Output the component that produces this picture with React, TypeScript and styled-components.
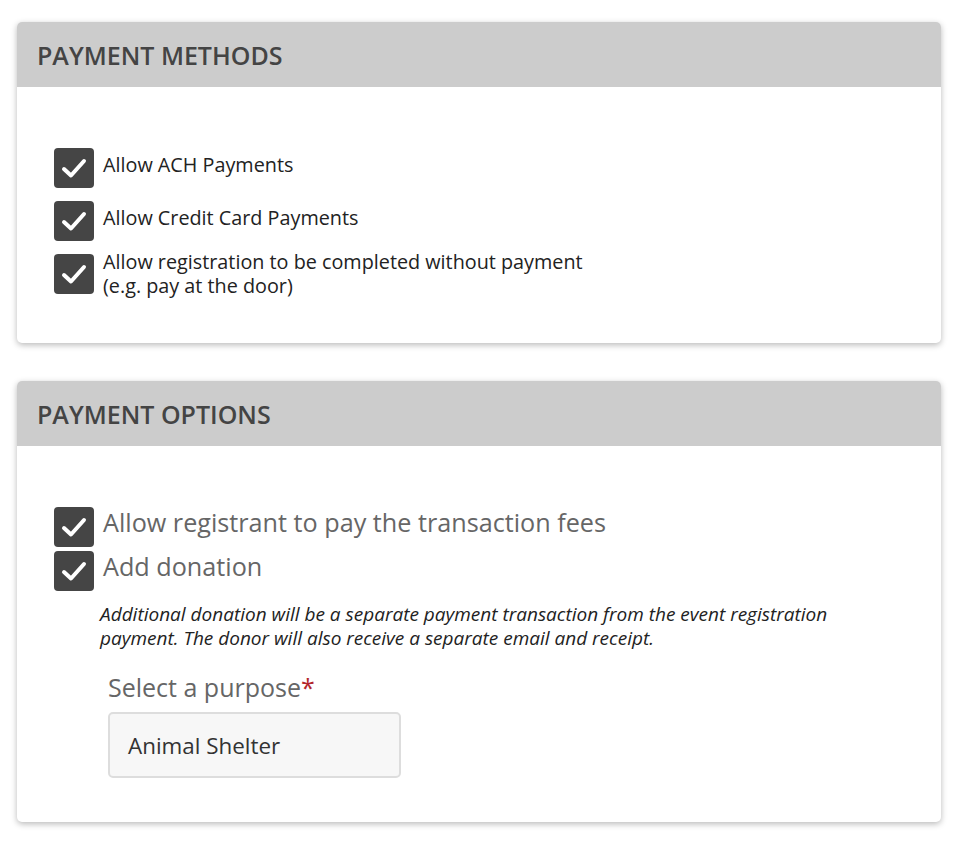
import React from "react";
import styled, { createGlobalStyle } from "styled-components";

const Global = createGlobalStyle`
  html, body { margin: 0; padding: 0; background: #ffffff; }
  body { font-family: "Open Sans", "Noto Sans", sans-serif; color: #333; }
`;

const Page = styled.div`
  padding: 22px 21px 20px 17px;
  display: flex;
  flex-direction: column;
  gap: 38px;
`;

const Card = styled.section`
  background: #fff;
  border-radius: 5px;
  box-shadow: 0 2px 6px rgba(0, 0, 0, 0.28);
  overflow: hidden;
`;

const CardHeader = styled.header`
  height: 65px;
  background: #cccccc;
  display: flex;
  align-items: center;
  padding: 0 20px;
`;

const CardTitle = styled.h2`
  margin: 0;
  font-size: 25px;
  font-weight: 600;
  color: #444;
  letter-spacing: 0;
`;

const CardBody = styled.div<{ $pad: string }>`
  padding: ${(p) => p.$pad};
  display: flex;
  flex-direction: column;
`;

const CheckList = styled.div<{ $gap: number }>`
  display: flex;
  flex-direction: column;
  gap: ${(p) => p.$gap}px;
`;

const CheckRow = styled.label`
  display: flex;
  align-items: flex-start;
  gap: 9px;
`;

const Box = styled.span`
  flex: none;
  width: 40px;
  height: 40px;
  border-radius: 4px;
  background: #454545;
  display: flex;
  align-items: center;
  justify-content: center;
`;

const CheckText = styled.span<{ $size: number; $lh: number; $top: number; $color: string }>`
  font-size: ${(p) => p.$size}px;
  line-height: ${(p) => p.$lh}px;
  color: ${(p) => p.$color};
  margin-top: ${(p) => p.$top}px;
`;

const Note = styled.p`
  margin: 11px 0 0 46px;
  font-size: 19px;
  line-height: 24px;
  font-style: italic;
  color: #222;
`;

const Field = styled.div`
  margin: 22px 0 0 54px;
  display: flex;
  flex-direction: column;
  gap: 10px;
`;

const FieldLabel = styled.span`
  font-size: 25px;
  line-height: 30px;
  color: #666;
`;

const Req = styled.span`
  color: #b3262b;
`;

const Input = styled.div`
  width: 293px;
  height: 66px;
  box-sizing: border-box;
  background: #f7f7f7;
  border: 2px solid #dddddd;
  border-radius: 5px;
  display: flex;
  align-items: center;
  padding: 0 18px;
  font-size: 22.4px;
  color: #333;
`;

const Check = () => (
  <Box>
    <svg width="26" height="22" viewBox="0 0 26 22" fill="none">
      <path d="M3 12 L10 18.5 L23 4" stroke="#fff" strokeWidth="4" strokeLinecap="round" strokeLinejoin="round" />
    </svg>
  </Box>
);

export default function App() {
  return (
    <>
      <Global />
      <Page>
        <Card>
          <CardHeader>
            <CardTitle>PAYMENT METHODS</CardTitle>
          </CardHeader>
          <CardBody $pad="61px 37px 46px">
            <CheckList $gap={13}>
              <CheckRow>
                <Check />
                <CheckText $size={19.8} $lh={26} $top={4} $color="#222">Allow ACH Payments</CheckText>
              </CheckRow>
              <CheckRow>
                <Check />
                <CheckText $size={19.8} $lh={26} $top={4} $color="#222">Allow Credit Card Payments</CheckText>
              </CheckRow>
              <CheckRow>
                <Check />
                <CheckText $size={19.8} $lh={23.5} $top={-4} $color="#222">
                  Allow registration to be completed without payment
                  <br />
                  (e.g. pay at the door)
                </CheckText>
              </CheckRow>
            </CheckList>
          </CardBody>
        </Card>
        <Card>
          <CardHeader>
            <CardTitle>PAYMENT OPTIONS</CardTitle>
          </CardHeader>
          <CardBody $pad="61px 37px 44px">
            <CheckList $gap={4}>
              <CheckRow>
                <Check />
                <CheckText $size={25.2} $lh={32} $top={-1} $color="#666">Allow registrant to pay the transaction fees</CheckText>
              </CheckRow>
              <CheckRow>
                <Check />
                <CheckText $size={25.2} $lh={32} $top={-1} $color="#666">Add donation</CheckText>
              </CheckRow>
            </CheckList>
            <Note>
              Additional donation will be a separate payment transaction from the event registration
              <br />
              payment. The donor will also receive a separate email and receipt.
            </Note>
            <Field>
              <FieldLabel>
                Select a purpose<Req>*</Req>
              </FieldLabel>
              <Input>Animal Shelter</Input>
            </Field>
          </CardBody>
        </Card>
      </Page>
    </>
  );
}
